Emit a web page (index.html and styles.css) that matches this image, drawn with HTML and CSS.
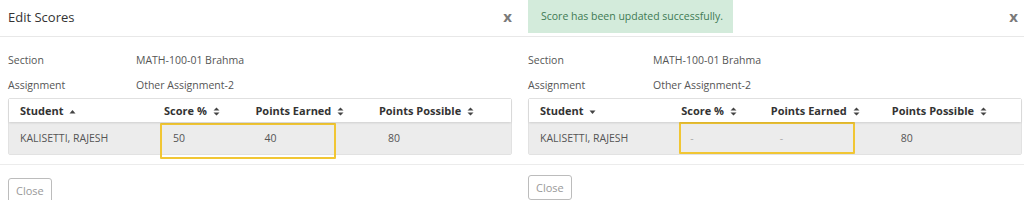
FILE: index.html
```html
<!DOCTYPE html>
<html lang="en">
<head>
<meta charset="utf-8">
<title>Edit Scores</title>
<link rel="stylesheet" href="styles.css">
</head>
<body>
<div class="page">
  <section class="panel panel-left">
    <header class="panel-head">
      <h1 class="title">Edit Scores</h1>
      <span class="close-x">x</span>
    </header>
    <div class="panel-body">
      <div class="meta"><span class="meta-label">Section</span><span class="meta-value">MATH-100-01 Brahma</span></div>
      <div class="meta"><span class="meta-label">Assignment</span><span class="meta-value">Other Assignment-2</span></div>
      <div class="table">
        <div class="thead">
          <div class="th">Student <svg class="sort" width="7" height="8" viewBox="0 0 7 8"><path d="M0.5 5.5 L3.5 2 L6.5 5.5 Z" fill="#444"/></svg></div>
          <div class="th">Score % <svg class="sort" width="7" height="9" viewBox="0 0 7 9"><path d="M0.5 3.6 L3.5 0.6 L6.5 3.6 Z M0.5 5.4 L3.5 8.4 L6.5 5.4 Z" fill="#444"/></svg></div>
          <div class="th">Points Earned <svg class="sort" width="7" height="9" viewBox="0 0 7 9"><path d="M0.5 3.6 L3.5 0.6 L6.5 3.6 Z M0.5 5.4 L3.5 8.4 L6.5 5.4 Z" fill="#444"/></svg></div>
          <div class="th">Points Possible <svg class="sort" width="7" height="9" viewBox="0 0 7 9"><path d="M0.5 3.6 L3.5 0.6 L6.5 3.6 Z M0.5 5.4 L3.5 8.4 L6.5 5.4 Z" fill="#444"/></svg></div>
        </div>
        <div class="trow">
          <div class="td">KALISETTI, RAJESH</div>
          <div class="td val">50</div>
          <div class="td val">40</div>
          <div class="td val">80</div>
          <div class="highlight highlight-left"></div>
        </div>
      </div>
    </div>
    <footer class="panel-foot">
      <button class="btn" type="button">Close</button>
    </footer>
  </section>

  <section class="panel panel-right">
    <header class="panel-head">
      <div class="alert">Score has been updated successfully.</div>
      <span class="close-x">x</span>
    </header>
    <div class="panel-body">
      <div class="meta"><span class="meta-label">Section</span><span class="meta-value">MATH-100-01 Brahma</span></div>
      <div class="meta"><span class="meta-label">Assignment</span><span class="meta-value">Other Assignment-2</span></div>
      <div class="table">
        <div class="thead">
          <div class="th">Student <svg class="sort" width="7" height="8" viewBox="0 0 7 8"><path d="M0.5 2.5 L3.5 6 L6.5 2.5 Z" fill="#444"/></svg></div>
          <div class="th">Score % <svg class="sort" width="7" height="9" viewBox="0 0 7 9"><path d="M0.5 3.6 L3.5 0.6 L6.5 3.6 Z M0.5 5.4 L3.5 8.4 L6.5 5.4 Z" fill="#444"/></svg></div>
          <div class="th">Points Earned <svg class="sort" width="7" height="9" viewBox="0 0 7 9"><path d="M0.5 3.6 L3.5 0.6 L6.5 3.6 Z M0.5 5.4 L3.5 8.4 L6.5 5.4 Z" fill="#444"/></svg></div>
          <div class="th">Points Possible <svg class="sort" width="7" height="9" viewBox="0 0 7 9"><path d="M0.5 3.6 L3.5 0.6 L6.5 3.6 Z M0.5 5.4 L3.5 8.4 L6.5 5.4 Z" fill="#444"/></svg></div>
        </div>
        <div class="trow">
          <div class="td">KALISETTI, RAJESH</div>
          <div class="td val dash">-</div>
          <div class="td val dash">-</div>
          <div class="td val">80</div>
          <div class="highlight highlight-right"></div>
        </div>
      </div>
    </div>
    <footer class="panel-foot">
      <button class="btn" type="button">Close</button>
    </footer>
  </section>
</div>
</body>
</html>
```

FILE: styles.css
```css
html, body {
  margin: 0;
  padding: 0;
  background: #ffffff;
}

body {
  font-family: "Open Sans", "Liberation Sans", sans-serif;
  font-size: 10.5px;
  color: #555;
  width: 1024px;
  height: 200px;
  overflow: hidden;
}

.page {
  display: flex;
  width: 1024px;
}

.panel {
  display: flex;
  flex-direction: column;
}

.panel-left {
  width: 520px;
  padding: 0 8px 0 8px;
  box-sizing: border-box;
}

.panel-right {
  width: 504px;
  padding: 0 2px 0 8px;
  box-sizing: border-box;
}

.panel-head {
  height: 37px;
  display: flex;
  align-items: flex-start;
  justify-content: space-between;
  border-bottom: 1px solid #e8e8e8;
  margin: 0 -8px;
  padding: 0 8px;
  box-sizing: border-box;
}

.panel-right .panel-head {
  margin: 0 -2px 0 -8px;
  padding: 0 6px 0 8px;
}

.title {
  margin: 0;
  font-size: 13px;
  font-weight: 400;
  color: #333;
  line-height: 34px;
}

.close-x {
  font-size: 15px;
  font-weight: 700;
  color: #7a7a7a;
  line-height: 32px;
}

.alert {
  background: #d3ebdb;
  color: #3e7a54;
  height: 33px;
  line-height: 33px;
  padding: 0 13px;
  width: 205px;
  box-sizing: border-box;
  font-size: 10.5px;
  white-space: nowrap;
}

.panel-body {
  padding-top: 11px;
}

.meta {
  display: flex;
  height: 25px;
  line-height: 25px;
}

.meta-label {
  width: 128px;
  flex: none;
}

.panel-right .meta-label {
  width: 125px;
}

.table {
  border: 1px solid #e2e2e2;
  border-radius: 2px;
}

.thead, .trow {
  display: grid;
  grid-template-columns: 28.7% 18.2% 24.6% 1fr;
}

.thead {
  height: 23px;
  background: #fff;
  box-shadow: 0 1px 2px rgba(0, 0, 0, 0.12);
  position: relative;
  z-index: 1;
}

.th {
  font-size: 11px;
  font-weight: 700;
  color: #333;
  padding-left: 11px;
  line-height: 23px;
  white-space: nowrap;
}

.sort {
  margin-left: 3px;
  vertical-align: -1px;
}

.trow {
  height: 32px;
  background: #ececec;
  position: relative;
}

.td {
  padding-left: 11px;
  line-height: 32px;
  color: #555;
}

.td.val {
  padding-left: 20px;
}

.td.dash {
  color: #aaa;
}

.highlight {
  position: absolute;
  border: 2px solid #f1c634;
  border-radius: 1px;
  box-sizing: border-box;
}

.highlight-left {
  left: 151px;
  top: 1px;
  width: 176px;
  height: 36px;
}

.highlight-right {
  left: 150px;
  top: 0;
  width: 176px;
  height: 32px;
}

.panel-foot {
  margin: 9px -8px 0;
  padding: 13px 8px 0;
  border-top: 1px solid #ececec;
}

.panel-right .panel-foot {
  margin: 9px -2px 0 -8px;
  padding: 10px 8px 0;
}

.btn {
  font-family: "Open Sans", "Liberation Sans", sans-serif;
  font-size: 11px;
  color: #999;
  background: #fff;
  border: 1px solid #bcbcbc;
  border-radius: 3px;
  height: 25px;
  padding: 0 7px;
}
```
